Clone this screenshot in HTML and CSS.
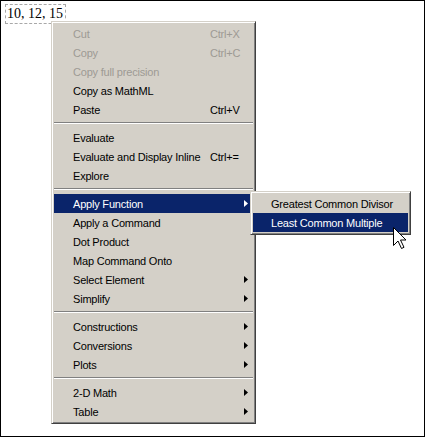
FILE: index.html
```html
<!DOCTYPE html>
<html lang="en">

<head>
    <meta charset="UTF-8">
    <title>Context Menu</title>
    <link rel="stylesheet" href="styles.css">
</head>

<body>
    <div class="frame">
        <span class="expr">10, 12, 15</span>

        <div class="menu main-menu">
            <div class="item disabled"><span class="label">Cut</span><span class="key">Ctrl+X</span></div>
            <div class="item disabled"><span class="label">Copy</span><span class="key">Ctrl+C</span></div>
            <div class="item disabled"><span class="label">Copy full precision</span></div>
            <div class="item"><span class="label">Copy as MathML</span></div>
            <div class="item"><span class="label">Paste</span><span class="key">Ctrl+V</span></div>
            <div class="sep"></div>
            <div class="item"><span class="label">Evaluate</span></div>
            <div class="item"><span class="label">Evaluate and Display Inline</span><span class="key">Ctrl+=</span></div>
            <div class="item"><span class="label">Explore</span></div>
            <div class="sep"></div>
            <div class="item active"><span class="label">Apply Function</span><span class="key"></span><span class="arrow"></span></div>
            <div class="item"><span class="label">Apply a Command</span></div>
            <div class="item"><span class="label">Dot Product</span></div>
            <div class="item"><span class="label">Map Command Onto</span></div>
            <div class="item"><span class="label">Select Element</span><span class="key"></span><span class="arrow"></span></div>
            <div class="item"><span class="label">Simplify</span><span class="key"></span><span class="arrow"></span></div>
            <div class="sep"></div>
            <div class="item"><span class="label">Constructions</span><span class="key"></span><span class="arrow"></span></div>
            <div class="item"><span class="label">Conversions</span><span class="key"></span><span class="arrow"></span></div>
            <div class="item"><span class="label">Plots</span><span class="key"></span><span class="arrow"></span></div>
            <div class="sep"></div>
            <div class="item"><span class="label">2-D Math</span><span class="key"></span><span class="arrow"></span></div>
            <div class="item"><span class="label">Table</span><span class="key"></span><span class="arrow"></span></div>
        </div>

        <div class="menu sub-menu">
            <div class="item"><span class="label">Greatest Common Divisor</span></div>
            <div class="item active"><span class="label">Least Common Multiple</span></div>
        </div>

        <svg class="cursor" width="13" height="22" viewBox="0 0 13 22">
            <path d="M0.5 0.5 V18.5 L5 14 L8.5 21.5 L11 20.3 L7.5 13 H13 Z" fill="#fff" stroke="#000" stroke-width="1" stroke-linejoin="miter"/>
        </svg>
    </div>
</body>

</html>
```

FILE: styles.css
```css
* {
    margin: 0;
    padding: 0;
    box-sizing: border-box;
}

body {
    background: #fff;
    width: 428px;
    height: 440px;
}

.frame {
    position: relative;
    width: 425px;
    height: 437px;
    border: 1px solid #000;
    padding: 3px 0 0 4px;
    background: #fff;
}

.expr {
    display: inline-block;
    border: 1px dashed #a8a8a8;
    padding: 0 2px 0 1px;
    font-family: "Liberation Serif", "Times New Roman", serif;
    font-size: 14px;
    line-height: 18px;
    color: #000;
}

.menu {
    position: absolute;
    background: #d4d0c8;
    border: 1px solid;
    border-color: #d4d0c8 #404040 #404040 #d4d0c8;
    box-shadow: inset 1px 1px 0 #fff, inset -1px -1px 0 #808080;
    padding: 2px;
    font-family: "Liberation Sans", Tahoma, sans-serif;
    font-size: 11px;
    letter-spacing: -0.2px;
    color: #000;
}

.main-menu {
    left: 50px;
    top: 20px;
    width: 205px;
}

.sub-menu {
    left: 249px;
    top: 190px;
    width: 161px;
}

.item {
    display: flex;
    align-items: center;
    height: 19px;
    padding-left: 19px;
    white-space: nowrap;
}

.sub-menu .item {
    padding-left: 18px;
}

.item .label {
    width: 137px;
}

.sub-menu .item .label {
    width: auto;
}

.item .key {
    flex: 1;
}

.item .arrow {
    width: 4px;
    height: 7px;
    margin-right: 5px;
    background: currentColor;
    clip-path: polygon(0 0, 100% 50%, 0 100%);
}

.item.active {
    background: #0a246a;
    color: #fff;
}

.item.disabled {
    color: #9d9a94;
}

.sep {
    height: 9px;
    padding-top: 3px;
}

.sep:before {
    content: '';
    display: block;
    height: 1px;
    background: #808080;
    border-bottom: 1px solid #fff;
    box-sizing: content-box;
}

.cursor {
    position: absolute;
    left: 392px;
    top: 226px;
}
```
